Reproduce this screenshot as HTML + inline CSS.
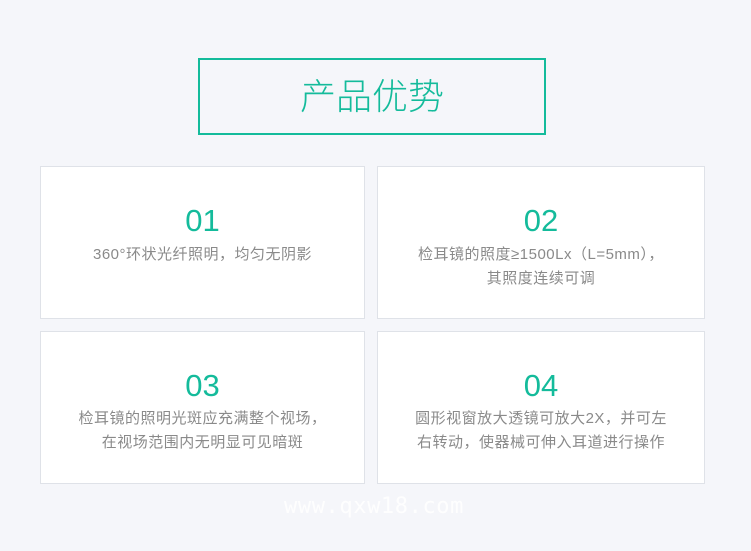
<!DOCTYPE html>
<html><head><meta charset="utf-8"><style>
body{margin:0;width:751px;height:551px;background:#f5f6fa;position:relative;overflow:hidden;font-family:"Liberation Sans","Noto Sans CJK SC",sans-serif}
.t{position:absolute;left:198px;top:58px;width:344px;height:73px;border:2px solid #14bb9b;color:#14bb9b;font-size:36px;text-align:center;line-height:73px;font-weight:300}
.c{position:absolute;width:325px;height:153px;background:#fff;border:1px solid #dfe2e8;box-sizing:border-box;text-align:center}
.n{position:absolute;left:0;right:0;font-size:31px;color:#14bb9b;line-height:36px}
.d{position:absolute;left:0;right:0;font-size:15px;letter-spacing:0.5px;color:#8a8a8a;line-height:24px;white-space:nowrap}
.w{position:absolute;left:284px;top:494px;color:#fff;font-size:22px;letter-spacing:0.6px;font-family:"DejaVu Sans Mono",monospace;opacity:.9}
</style></head><body>
<div class="t">产品优势</div>
<div class="c" style="left:40px;top:166px"><div class="n" style="top:36px">01</div><div class="d" style="top:76px">360°环状光纤照明，均匀无阴影</div></div>
<div class="c" style="left:377px;top:166px;width:328px"><div class="n" style="top:36px">02</div><div class="d" style="top:76px">检耳镜的照度≥1500Lx（L=5mm），<br>其照度连续可调</div></div>
<div class="c" style="left:40px;top:331px"><div class="n" style="top:36px">03</div><div class="d" style="top:75px">检耳镜的照明光斑应充满整个视场，<br>在视场范围内无明显可见暗斑</div></div>
<div class="c" style="left:377px;top:331px;width:328px"><div class="n" style="top:36px">04</div><div class="d" style="top:75px">圆形视窗放大透镜可放大2X，并可左<br>右转动，使器械可伸入耳道进行操作</div></div>
<div class="w">www.qxw18.com</div>
</body></html>
